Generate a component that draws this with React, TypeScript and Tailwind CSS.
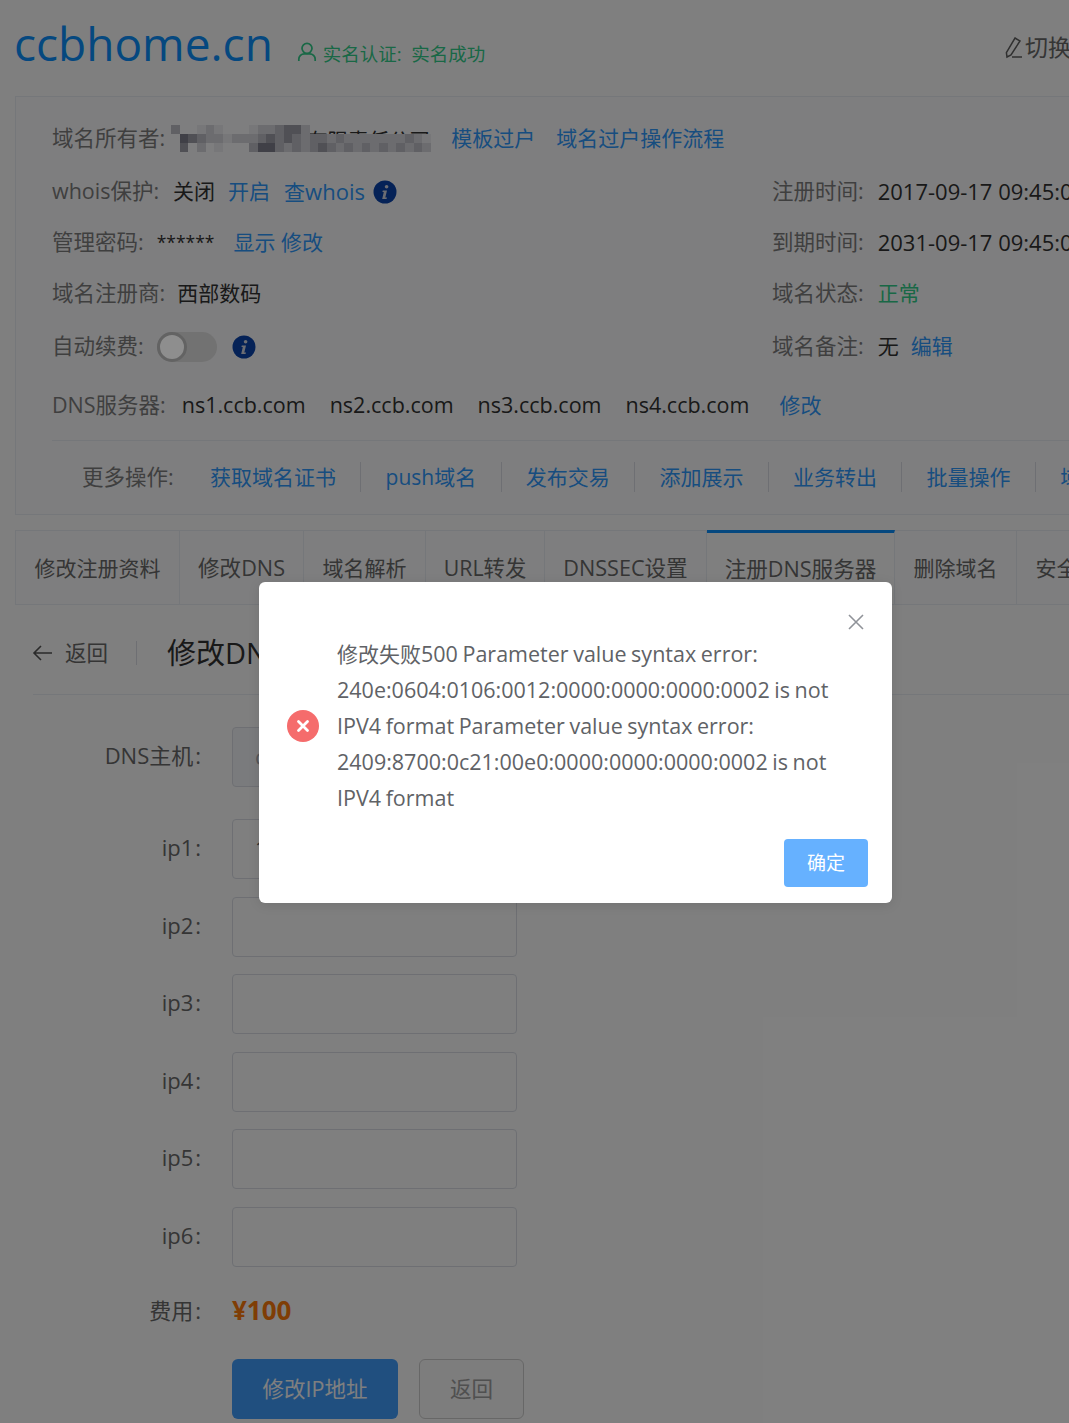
const Info = () => (
  <svg width="24" height="24" viewBox="0 0 24 24" className="shrink-0 relative z-10">
    <circle cx="12" cy="12" r="11.5" fill="#0b45ae" />
    <circle cx="13.6" cy="6.8" r="1.8" fill="#d8dbe6" />
    <path d="M9.8 10.4h4.2l-1.7 7h1.7l-.5 1.6H9.2l1.6-7H9.4z" fill="#d8dbe6" />
  </svg>
);

const L = ({ children }: { children: React.ReactNode }) => <span className="text-[#7f7f7f]">{children}</span>;
const A = ({ children, className = "" }: { children: React.ReactNode; className?: string }) => (
  <span className={`text-[#2f9aff] text-[21px] ${className}`}>{children}</span>
);

const tabs = [
  ["修改注册资料", "w-[164px] text-[21px]"],
  ["修改DNS", "w-[124px] text-[21.6px]"],
  ["域名解析", "w-[122px] text-[21px]"],
  ["URL转发", "w-[119px] text-[21.3px]"],
  ["DNSSEC设置", "w-[162px] text-[21.6px]"],
  ["注册DNS服务器", "w-[188px] text-[21.6px]"],
  ["删除域名", "w-[122px] text-[21px]"],
  ["安全设置", "w-[122px] text-[21px]"],
];

const ops = ["获取域名证书", "push域名", "发布交易", "添加展示", "业务转出", "批量操作", "域名"];

const mosaicRows = [
  "300121000122344200000000000000",
  "054322122234343233232222222321",
  "040201000355323234323232323232",
];
const shades: Record<string, string> = {
  "0": "transparent",
  "1": "#eeeef2",
  "2": "#d8d8de",
  "3": "#c0c0c8",
  "4": "#a0a0aa",
  "5": "#80808e",
};

const Mosaic = () => (
  <div className="relative ml-[6px] w-[260px] h-[27px]">
    <div className="absolute left-[115px] top-[2px] h-[12px] overflow-hidden text-[21px] leading-[26px] tracking-[-0.5px] text-[#333] whitespace-nowrap">
      之有限责任公司
    </div>
    <div className="absolute inset-0 flex flex-col">
      {mosaicRows.map((r, y) => (
        <div key={y} className="flex h-[9px]">
          {r.split("").map((c, x) => (
            <div key={x} className="w-[8.67px] h-[9px] shrink-0" style={{ backgroundColor: shades[c] }} />
          ))}
        </div>
      ))}
    </div>
  </div>
);

const Lbl = ({ children }: { children: React.ReactNode }) => (
  <div className="w-[201px] mr-[1px] mb-[4px] text-right text-[22px] text-[#6a6a6a]">
    {children}
    <span className="ml-[2px]">:</span>
  </div>
);

const Input = ({ label, value }: { label: string; value?: string }) => (
  <div className="flex items-center h-[60px]">
    <Lbl>{label}</Lbl>
    <div className="ml-[30px] w-[285px] h-[60px] border border-[#dcdfe6] rounded-[4px] bg-white px-[22px] flex items-center text-[#606266]">{value}</div>
  </div>
);

export default function App() {
  return (
    <div
      className="relative w-[1069px] h-[1423px] overflow-hidden bg-white text-[21.5px] leading-[30px]"
      style={{ fontFamily: '"Open Sans", "Noto Sans CJK SC", sans-serif' }}
    >
      <div className="w-[1200px] pl-[15px]">
        {/* header */}
        <div className="h-[96px] flex items-start relative">
          <div className="text-[#0a90ff] text-[46px] leading-[60px] mt-[13px] -ml-[1px]">ccbhome.cn</div>
          <div className="flex items-center ml-[24px] mt-[40px] text-[#32d08c] text-[18.5px] leading-[28px]">
            <svg width="20" height="22" viewBox="0 0 22 24" fill="none" stroke="currentColor" strokeWidth="1.9" className="mr-[6px] -mt-[5px]">
              <circle cx="11" cy="8" r="5.5" />
              <path d="M2 22v-2a6 6 0 0 1 6-6h6a6 6 0 0 1 6 6v2" />
            </svg>
            实名认证:&nbsp;&nbsp;实名成功
          </div>
          <div className="absolute left-[987px] top-[32px] flex items-center text-[#6a6a6a] text-[23px]">
            <svg width="22" height="24" viewBox="0 0 22 24" fill="none" stroke="#606060" strokeWidth="1.5">
              <path d="M13 3l5 3-9 14-4 2-.6-4.4z" />
              <path d="M10 22h10" />
            </svg>
            <span className="ml-[1px]">切换</span>
          </div>
        </div>

        {/* info panel */}
        <div className="border border-[#ebeef5] bg-[#fdfdfe] h-[419px] pl-[36px] relative">
          <div className="h-[26px]" />
          <div className="flex items-center h-[30px]">
            <L>域名所有者:</L>
            <Mosaic />
            <A className="ml-[20px]">模板过户</A>
            <A className="ml-[21px]">域名过户操作流程</A>
          </div>
          <div className="flex items-center h-[30px] mt-[23px]">
            <L>whois保护:</L>
            <span className="ml-[14px] text-[#333] text-[21px]">关闭</span>
            <A className="ml-[13px]">开启</A>
            <A className="ml-[14px]">查<span className="text-[22px]">whois</span></A>
            <span className="ml-[8px] translate-y-[1px]"><Info /></span>
            <div className="absolute left-[756px] flex">
              <L>注册时间:</L>
              <span className="ml-[14px] text-[#333] text-[22px] whitespace-nowrap">2017-09-17 09:45:00</span>
            </div>
          </div>
          <div className="flex items-center h-[30px] mt-[21px]">
            <L>管理密码:</L>
            <span className="ml-[13px] text-[#333] text-[17.5px]">******</span>
            <A className="ml-[19px]">显示 修改</A>
            <div className="absolute left-[756px] flex">
              <L>到期时间:</L>
              <span className="ml-[14px] text-[#333] text-[22px] whitespace-nowrap">2031-09-17 09:45:00</span>
            </div>
          </div>
          <div className="flex items-center h-[30px] mt-[21px]">
            <L>域名注册商:</L>
            <span className="ml-[12px] text-[#333] text-[21px]">西部数码</span>
            <div className="absolute left-[756px] flex">
              <L>域名状态:</L>
              <span className="ml-[14px] text-[21px] text-[#32d08c]">正常</span>
            </div>
          </div>
          <div className="flex items-center h-[30px] mt-[23px]">
            <L>自动续费:</L>
            <div className="ml-[13px] w-[60px] h-[30px] rounded-full bg-[#727272] relative z-10 translate-y-[1px]">
              <div className="absolute left-0 top-0 w-[30px] h-[30px] rounded-full border-[3px] border-[#636363] bg-[#8e8e8e]" />
            </div>
            <span className="ml-[15px] translate-y-[1px]"><Info /></span>
            <div className="absolute left-[756px] flex">
              <L>域名备注:</L>
              <span className="ml-[14px] text-[#333] text-[21px]">无</span>
              <A className="ml-[12px]">编辑</A>
            </div>
          </div>
          <div className="flex items-center h-[30px] mt-[29px] whitespace-nowrap">
            <L>DNS服务器:</L>
            <span className="ml-[16px] text-[#333]">ns1.ccb.com</span>
            <span className="ml-[24px] text-[#333]">ns2.ccb.com</span>
            <span className="ml-[24px] text-[#333]">ns3.ccb.com</span>
            <span className="ml-[24px] text-[#333]">ns4.ccb.com</span>
            <A className="ml-[30px]">修改</A>
          </div>
          <div className="border-t border-[#ebeef5] mt-[20px] pt-[21px] flex items-center whitespace-nowrap">
            <span className="ml-[30px] w-[128px] text-[#7f7f7f]">更多操作:</span>
            {ops.map((o, i) => (
              <div key={o} className="flex items-center">
                <A>{o}</A>
                {i < ops.length - 1 && <span className="w-px h-[30px] bg-[#dcdfe6] mx-[24.3px]" />}
              </div>
            ))}
          </div>
        </div>

        {/* tabs */}
        <div className="mt-[15px] h-[75px] border border-[#ebeef5] flex bg-[#fdfdfe] whitespace-nowrap text-[#6a6a6a]">
          {tabs.map(([t, w], i) => (
            <div
              key={t}
              className={`${w} shrink-0 flex items-center justify-center border-r border-[#ebeef5] ${i === 5 ? "border-t-[3px] border-t-[#0a90ff] -mt-px bg-white" : ""}`}
            >
              {t}
            </div>
          ))}
        </div>

        {/* back row */}
        <div className="ml-[18px] w-[1100px] h-[91px] mt-[-1px] pt-[8px] border-b border-[#ebeef5] flex items-center text-[#6a6a6a]">
          <svg width="24" height="24" viewBox="0 0 24 24" fill="none" stroke="#555" strokeWidth="1.6" className="-ml-[2px]"><path d="M21 12H3M10 5l-7 7 7 7" /></svg>
          <span className="ml-[10px]">返回</span>
          <span className="w-px h-[24px] bg-[#dcdfe6] ml-[28px]" />
          <span className="ml-[30px] text-[#333] text-[29px] whitespace-nowrap">修改DNS主机IP</span>
        </div>

        {/* form */}
        <div className="flex items-center h-[60px] mt-[32px] -ml-[15px]">
          <Lbl>DNS主机</Lbl>
          <div className="ml-[30px] w-[285px] h-[60px] border border-[#dcdfe6] rounded-[4px] bg-[#f5f7fa] px-[22px] flex items-center text-[#a8abb2]">c</div>
        </div>
        <div className="-ml-[15px] mt-[32px] flex flex-col gap-[17.5px]">
          <Input label="ip1" value="1" />
          <Input label="ip2" />
          <Input label="ip3" />
          <Input label="ip4" />
          <Input label="ip5" />
          <Input label="ip6" />
        </div>
        <div className="-ml-[15px] mt-[28.5px] flex items-center h-[30px]">
          <div className="w-[201px] mr-[1px] text-right text-[22px] text-[#6a6a6a]">费用<span className="ml-[2px]">:</span></div>
          <div className="ml-[30px] text-[#ff7a0a] font-bold text-[26px]">¥100</div>
        </div>
        <div className="-ml-[15px] mt-[34px] pl-[232px] flex gap-[21px]">
          <div className="w-[166px] h-[60px] rounded-[6px] bg-[#409eff] text-white flex items-center justify-center">修改IP地址</div>
          <div className="w-[105px] h-[60px] rounded-[6px] border border-[#cfcfcf] bg-[#fafafa] text-[#a0a0a0] flex items-center justify-center">返回</div>
        </div>
      </div>

      {/* mask */}
      <div className="absolute inset-0 bg-black/50" />

      {/* dialog */}
      <div className="absolute z-20 left-[259px] top-[582px] w-[633px] h-[321px] bg-white rounded-[6px] shadow-[0_2px_12px_rgba(0,0,0,0.1)]">
        <svg width="18" height="18" viewBox="0 0 18 18" fill="none" stroke="#909399" strokeWidth="1.6" className="absolute right-[27px] top-[31px]">
          <path d="M2 2l14 14M16 2L2 16" />
        </svg>
        <div className="absolute left-[78px] top-[54px] w-[510px] text-[#606266] leading-[36px] text-[21.5px] [word-spacing:-1px]">
          <span className="text-[21px]">修改失败</span>500 Parameter value syntax error: 240e:0604:0106:0012:0000:0000:0000:0002 is not IPV4 format Parameter value syntax error: 2409:8700:0c21:00e0:0000:0000:0000:0002 is not IPV4 format
        </div>
        <div className="absolute left-[28px] top-[128px] w-[32px] h-[32px] rounded-full bg-[#f56c6c] flex items-center justify-center">
          <svg width="14" height="14" viewBox="0 0 14 14" stroke="#fff" strokeWidth="2.8" strokeLinecap="round"><path d="M2.5 2.5l9 9M11.5 2.5l-9 9" /></svg>
        </div>
        <div className="absolute left-[525px] top-[257px] w-[84px] h-[48px] rounded-[4px] bg-[#66b1ff] text-white text-[19px] flex items-center justify-center">确定</div>
      </div>
    </div>
  );
}
